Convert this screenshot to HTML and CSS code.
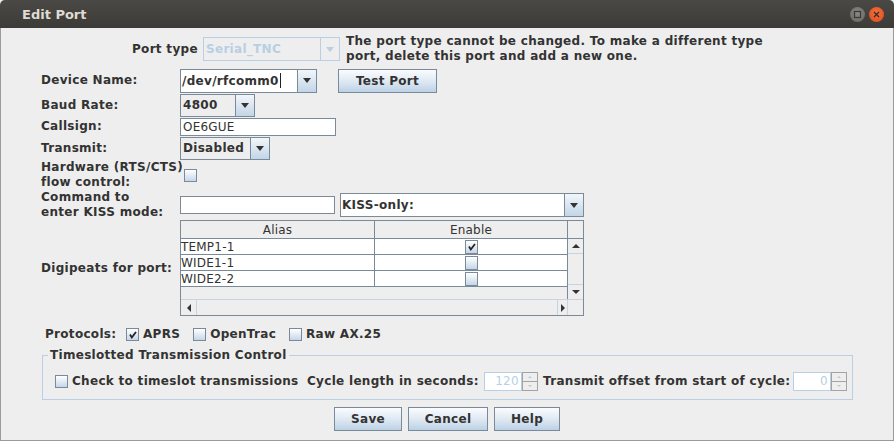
FILE: index.html
```html
<!DOCTYPE html>
<html>
<head>
<meta charset="utf-8">
<title>Edit Port</title>
<link rel="stylesheet" href="styles.css">
</head>
<body>
<div class="window">
  <div class="titlebar">
    <span class="title">Edit Port</span>
    <div class="wbtns">
      <span class="wbtn wmax"><svg width="15" height="15" viewBox="0 0 15 15"><rect x="4.5" y="4.5" width="6" height="6" fill="none" stroke="#3a3935" stroke-width="1.2"/></svg></span>
      <span class="wbtn wclose"><svg width="15" height="15" viewBox="0 0 15 15"><path d="M5 5 L10 10 M10 5 L5 10" stroke="#3a2a22" stroke-width="1.3" fill="none"/></svg></span>
    </div>
  </div>
  <div class="content">
    <div class="porttype">
      <span class="lbl">Port type</span>
      <div class="combo disabled w137"><span class="val">Serial_TNC</span><span class="arrow"></span></div>
      <div class="info">The port type cannot be changed. To make a different type<br>port, delete this port and add a new one.</div>
    </div>

    <div class="row r-device">
      <span class="lbl">Device Name:</span>
      <div class="ecombo w137"><span class="efield">/dev/rfcomm0<span class="caret"></span></span><span class="arrow"></span></div>
      <button class="btn b-test">Test Port</button>
    </div>
    <div class="row r-baud">
      <span class="lbl">Baud Rate:</span>
      <div class="combo w75"><span class="val">4800</span><span class="arrow"></span></div>
    </div>
    <div class="row r-call">
      <span class="lbl">Callsign:</span>
      <span class="field w156">OE6GUE</span>
    </div>
    <div class="row r-tx">
      <span class="lbl">Transmit:</span>
      <div class="combo w90"><span class="val">Disabled</span><span class="arrow"></span></div>
    </div>
    <div class="row r-hw">
      <span class="lbl">Hardware (RTS/CTS)<br>flow control:</span>
      <span class="cb hwcb"></span>
    </div>
    <div class="row r-kiss">
      <span class="lbl">Command to<br>enter KISS mode:</span>
      <span class="field w155"></span>
      <div class="ecombo kiss"><span class="efield">KISS-only:</span><span class="arrow"></span></div>
    </div>
    <div class="row r-digi">
      <span class="lbl">Digipeats for port:</span>
      <div class="scrollpane">
        <div class="thead">
          <span class="th c1">Alias</span>
          <span class="th c2">Enable</span>
        </div>
        <div class="corner"></div>
        <div class="viewport">
          <div class="tr"><span class="td c1">TEMP1-1</span><span class="td c2"><span class="cb checked"><svg width="11" height="11" viewBox="0 0 11 11"><path d="M3 5.5 L4.8 8.5 L9 3" stroke="#222" stroke-width="1.8" fill="none"/></svg></span></span></div>
          <div class="tr"><span class="td c1">WIDE1-1</span><span class="td c2"><span class="cb"></span></span></div>
          <div class="tr"><span class="td c1">WIDE2-2</span><span class="td c2"><span class="cb"></span></span></div>
        </div>
        <div class="vscroll">
          <span class="sbtn"><span class="tri up"></span></span>
          <span class="vthumb"></span>
          <span class="sbtn"><span class="tri down"></span></span>
        </div>
        <div class="hscroll">
          <span class="sbtn h"><span class="tri left"></span></span>
          <span class="hthumb"></span>
          <span class="sbtn h"><span class="tri right"></span></span>
        </div>
        <div class="corner2"></div>
      </div>
    </div>

    <div class="protocols">
      <span class="plbl">Protocols:</span>
      <span class="chk"><span class="cb checked"><svg width="11" height="11" viewBox="0 0 11 11"><path d="M3 5.5 L4.8 8.5 L9 3" stroke="#222" stroke-width="1.8" fill="none"/></svg></span>APRS</span>
      <span class="chk"><span class="cb"></span>OpenTrac</span>
      <span class="chk"><span class="cb"></span>Raw AX.25</span>
    </div>

    <fieldset class="timeslot">
      <legend>Timeslotted Transmission Control</legend>
      <div class="tsrow">
        <span class="chk"><span class="cb"></span>Check to timeslot transmissions</span>
        <span class="tl1">Cycle length in seconds:</span>
        <span class="spin"><span class="sval">120</span><span class="sbtns"><span class="sb"><span class="tri sup"></span></span><span class="sb"><span class="tri sdown"></span></span></span></span>
        <span class="tl2">Transmit offset from start of cycle:</span>
        <span class="spin"><span class="sval">0</span><span class="sbtns"><span class="sb"><span class="tri sup"></span></span><span class="sb"><span class="tri sdown"></span></span></span></span>
      </div>
    </fieldset>

    <div class="buttons">
      <button class="btn b-save">Save</button>
      <button class="btn b-cancel">Cancel</button>
      <button class="btn b-help">Help</button>
    </div>
  </div>
</div>
</body>
</html>
```
FILE: styles.css
```css
* { box-sizing: border-box; }
html, body { margin: 0; padding: 0; background: #eeeeee; }
body {
  font-family: "DejaVu Sans", "Liberation Sans", sans-serif;
  font-size: 12px;
  color: #333333;
  font-weight: bold;
  letter-spacing: 0.3px;
}
.window { width: 894px; height: 441px; display: flex; flex-direction: column; }

.titlebar {
  height: 28px;
  flex: none;
  background: linear-gradient(#4a4945, #3c3b37);
  border-radius: 5px 5px 0 0;
  display: flex;
  align-items: center;
  padding-left: 22px;
  padding-right: 10px;
}
.title { color: #dfdbd2; font-size: 13px; font-weight: bold; flex: 1; letter-spacing: 0; }
.wbtns { display: flex; gap: 4px; align-items: center; }
.wbtn { width: 15px; height: 15px; border-radius: 50%; display: flex; }
.wmax { background: radial-gradient(circle at 50% 40%, #8a8985, #65645f); }
.wclose { background: radial-gradient(circle at 50% 40%, #f27243, #dd4814); }

.content {
  flex: 1;
  border-left: 1px solid #9b9b9b;
  border-right: 1px solid #9b9b9b;
  border-bottom: 1px solid #9b9b9b;
  padding-top: 6px;
  display: flex;
  flex-direction: column;
}

.porttype { display: flex; align-items: center; height: 30px; padding-left: 131px; }
.porttype .lbl { width: 71px; white-space: nowrap; }
.info { margin-left: 6px; line-height: 15px; white-space: nowrap; }

.row { display: flex; align-items: center; padding-left: 40px; }
.row > .lbl { width: 139px; flex: none; line-height: 15px; white-space: nowrap; }
.r-device { margin-top: 4px; height: 25px; }
.r-baud { height: 24px; }
.r-call { height: 19px; }
.r-tx { height: 24px; }
.r-hw { height: 30px; }
.r-kiss { height: 30px; }
.r-digi { height: 96px; }

.w137 { width: 137px; }
.w75 { width: 75px; }
.w90 { width: 90px; }
.w156 { width: 156px; }
.w155 { width: 155px; }

.combo {
  display: flex;
  height: 23px;
  border: 1px solid #7a8a99;
  background: #eeeeee;
}
.combo .val { flex: 1; display: flex; align-items: center; padding-left: 2px; }
.arrow {
  width: 19px;
  flex: none;
  border-left: 1px solid #7a8a99;
  background: linear-gradient(#f2f6fa, #c2d5e8);
  display: flex;
  align-items: center;
  justify-content: center;
}
.arrow::before {
  content: "";
  border-left: 4px solid transparent;
  border-right: 4px solid transparent;
  border-top: 5px solid #333;
}
.combo.disabled { border-color: #b8cfe5; color: #b8cfe5; height: 24px; }
.combo.disabled .arrow { background: #eeeeee; border-left-color: #b8cfe5; }
.combo.disabled .arrow::before { border-top-color: #b8cfe5; }

.ecombo { display: flex; height: 24px; }
.efield {
  flex: 1;
  background: #ffffff;
  border: 1px solid #7a8a99;
  display: flex;
  align-items: center;
  padding-left: 1px;
  white-space: nowrap;
}
.ecombo .arrow { border: 1px solid #7a8a99; border-left: 0; }
.caret { display: inline-block; width: 1px; height: 15px; background: #222; margin-left: 1px; }
.kiss { width: 244px; margin-left: 5px; }

.field {
  display: flex;
  align-items: center;
  height: 18px;
  border: 1px solid #7a8a99;
  background: #ffffff;
  font-weight: normal;
  letter-spacing: 0.2px;
  padding-left: 2px;
}

.btn {
  font-family: "DejaVu Sans", "Liberation Sans", sans-serif;
  font-size: 12px;
  font-weight: bold;
  letter-spacing: 0.3px;
  color: #333333;
  height: 24px;
  border: 1px solid #7a8a99;
  background: linear-gradient(#fbfcfe, #dce7f2 55%, #bcd1e6);
  padding: 0;
  margin: 0;
}
.b-test { width: 99px; margin-left: 21px; }
.b-save { width: 68px; }
.b-cancel { width: 80px; }
.b-help { width: 66px; }

.cb {
  width: 13px;
  height: 13px;
  flex: none;
  border: 1px solid #7a8a99;
  background: linear-gradient(#ffffff, #c5d6e7);
  display: inline-flex;
  align-items: center;
  justify-content: center;
}
.hwcb { margin-left: 4px; }

.scrollpane {
  width: 404px;
  height: 96px;
  border: 1px solid #7a8a99;
  display: grid;
  grid-template-columns: 1fr 16px;
  grid-template-rows: 18px 60px 16px;
  font-weight: normal;
  letter-spacing: 0.2px;
}
.thead { display: flex; border-bottom: 1px solid #7a8a99; background: #eeeeee; }
.th { display: flex; align-items: center; justify-content: center; }
.c1 { width: 194px; border-right: 1px solid #7a8a99; flex: none; }
.c2 { flex: 1; }
.corner { border-left: 1px solid #7a8a99; border-bottom: 1px solid #7a8a99; background: #eeeeee; }
.viewport { background: #eeeeee; }
.tr { display: flex; height: 16px; background: #ffffff; border-bottom: 1px solid #7a8a99; }
.td.c1 { display: flex; align-items: center; padding-left: 0; }
.td.c2 { display: flex; align-items: center; justify-content: center; }
.tr .cb { width: 13px; height: 14px; }

.vscroll { display: flex; flex-direction: column; border-left: 1px solid #7a8a99; background: #eeeeee; }
.sbtn { height: 15px; display: flex; align-items: center; justify-content: center; background: #eeeeee; border-bottom: 1px solid #c8d4e0; }
.vscroll .sbtn:last-child { border-bottom: 0; border-top: 1px solid #c8d4e0; }
.vthumb { flex: 1; }
.hscroll { display: flex; border-top: 1px solid #c8d4e0; background: #eeeeee; }
.sbtn.h { height: auto; width: 16px; border-bottom: 0; border-right: 1px solid #c8d4e0; }
.hscroll .sbtn.h:last-child { width: 10px; border-right: 0; border-left: 1px solid #c8d4e0; }
.hthumb { flex: 1; }
.corner2 { border-left: 1px solid #c8d4e0; border-top: 1px solid #c8d4e0; background: #eeeeee; }

.tri { width: 0; height: 0; }
.tri.up { border-left: 4px solid transparent; border-right: 4px solid transparent; border-bottom: 4px solid #333; }
.tri.down { border-left: 4px solid transparent; border-right: 4px solid transparent; border-top: 4px solid #333; }
.tri.left { border-top: 4px solid transparent; border-bottom: 4px solid transparent; border-right: 4px solid #333; }
.tri.right { border-top: 4px solid transparent; border-bottom: 4px solid transparent; border-left: 4px solid #333; }

.protocols { display: flex; align-items: center; height: 24px; margin-top: 6px; padding-left: 44px; }
.plbl { width: 81px; }
.chk { display: inline-flex; align-items: center; gap: 4px; margin-right: 13px; white-space: nowrap; }

.timeslot {
  margin: 2px 0 0 41px;
  width: 811px;
  border: 1px solid #b8cfe5;
  padding: 0 0 8px 12px;
  min-width: 0;
}
.timeslot legend { padding: 0 2px; margin-left: -7px; line-height: 14px; }
.tsrow { display: flex; align-items: center; height: 20px; margin-top: 9px; white-space: nowrap; }
.tsrow .chk { width: 252px; margin-right: 0; }
.tl1 { width: 177px; }
.tl2 { width: 250px; margin-left: 5px; }
.spin { display: flex; height: 19px; }
.sval {
  width: 38px;
  border: 1px solid #b8cfe5;
  background: #ffffff;
  color: #b8cfe5;
  font-weight: normal;
  display: flex;
  align-items: center;
  justify-content: flex-end;
  padding-right: 2px;
}
.sbtns { width: 16px; display: flex; flex-direction: column; border: 1px solid #a3a3a3; }
.sb { flex: 1; display: flex; align-items: center; justify-content: center; }
.sb:first-child { border-bottom: 1px solid #a3a3a3; }
.tri.sup { border-left: 2px solid transparent; border-right: 2px solid transparent; border-bottom: 2px solid #c0c8d0; }
.tri.sdown { border-left: 2px solid transparent; border-right: 2px solid transparent; border-top: 2px solid #c0c8d0; }

.buttons { display: flex; justify-content: center; gap: 6px; margin-top: 7px; }
```
